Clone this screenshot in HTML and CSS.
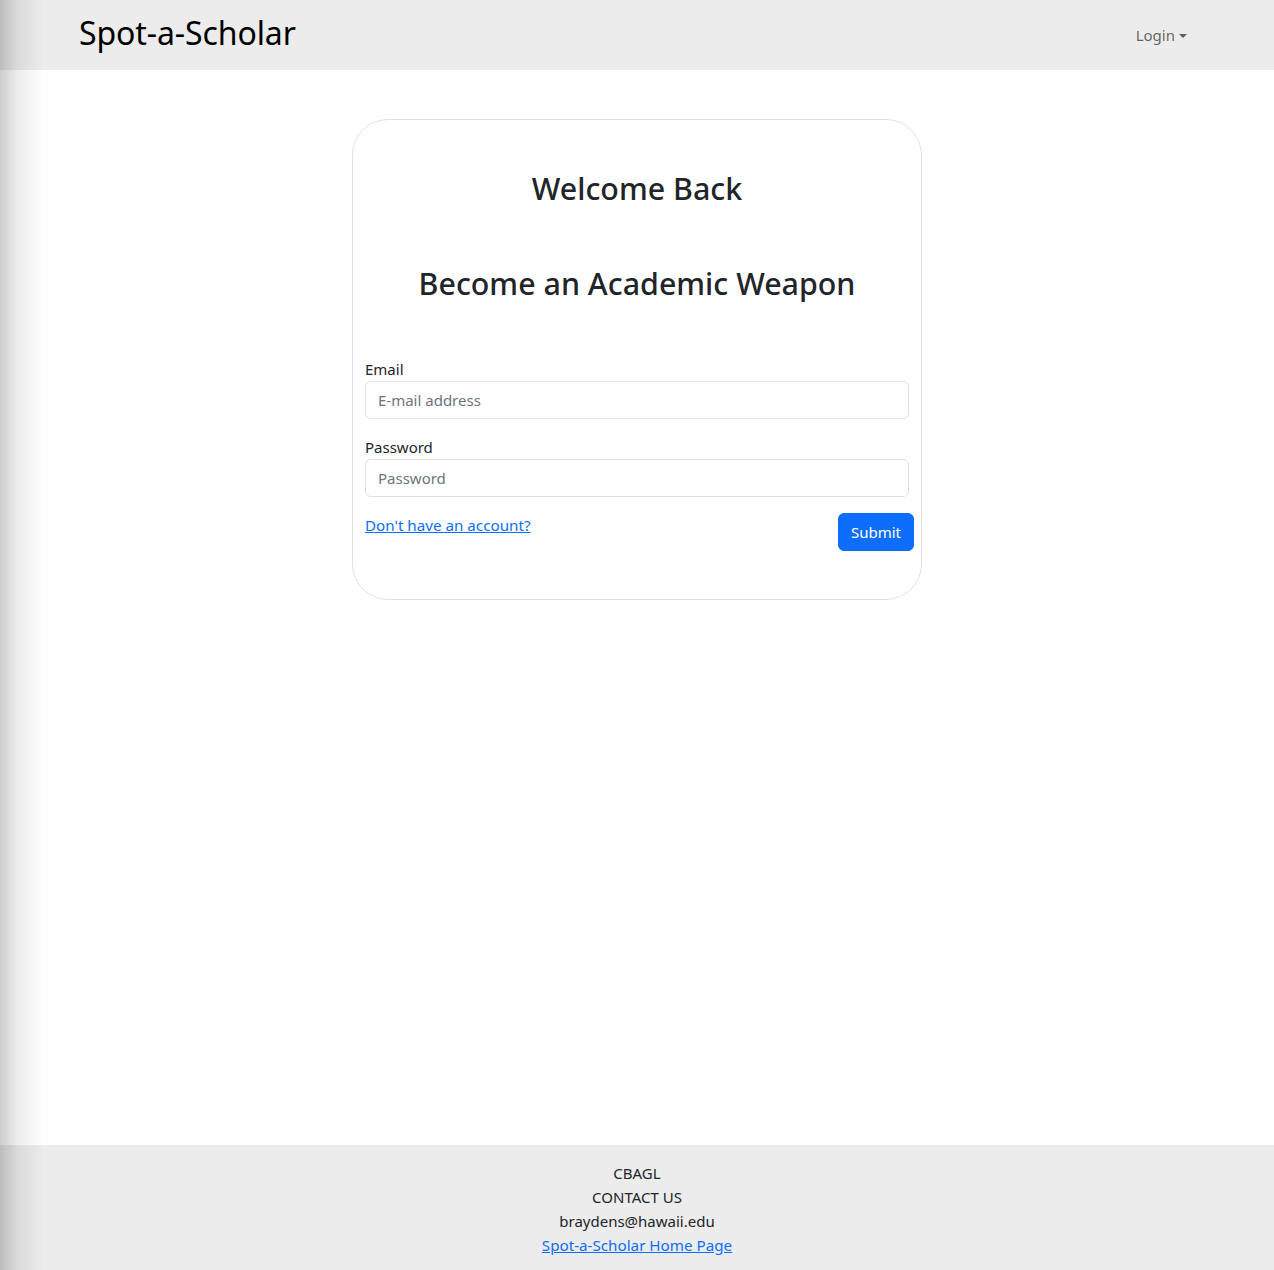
FILE: index.html
```html
<!DOCTYPE html>
<html lang="en">
<head>
<meta charset="utf-8">
<title>Spot-a-Scholar</title>
<link rel="stylesheet" href="styles.css">
</head>
<body>
<div class="edge-shade"></div>
<nav class="navbar">
  <div class="container nav-inner">
    <a class="brand" href="#">Spot-a-Scholar</a>
    <a class="nav-link" href="#">Login<span class="caret"></span></a>
  </div>
</nav>
<main class="main">
  <div class="card">
    <h2 class="title">Welcome Back</h2>
    <h2 class="subtitle">Become an Academic Weapon</h2>
    <form class="form">
      <label class="form-label" for="email">Email</label>
      <input class="form-control" id="email" type="email" placeholder="E-mail address">
      <label class="form-label gap" for="password">Password</label>
      <input class="form-control" id="password" type="password" placeholder="Password">
      <div class="form-foot">
        <a class="link" href="#">Don't have an account?</a>
        <button class="btn" type="button">Submit</button>
      </div>
    </form>
  </div>
</main>
<footer class="footer">
  <div>CBAGL</div>
  <div>CONTACT US</div>
  <div>braydens@hawaii.edu</div>
  <div><a class="link" href="#">Spot-a-Scholar Home Page</a></div>
</footer>
</body>
</html>
```
FILE: styles.css
```css
html, body {
  margin: 0;
  padding: 0;
}
body {
  font-family: "Noto Sans", "Open Sans", sans-serif;
  font-size: 16px;
  line-height: 24px;
  color: #212529;
  background: #fff;
  min-height: 100vh;
  display: flex;
  flex-direction: column;
}
.edge-shade {
  position: fixed;
  left: 0;
  top: 0;
  bottom: 0;
  width: 44px;
  background: linear-gradient(to right, rgba(0,0,0,0.2), rgba(0,0,0,0.07) 40%, rgba(0,0,0,0));
  pointer-events: none;
  z-index: 10;
}
.navbar {
  background: #ececec;
  height: 70px;
  flex-shrink: 0;
}
.container {
  width: 1140px;
  margin: 0 auto;
  padding: 0 12px;
  box-sizing: border-box;
}
.nav-inner {
  height: 100%;
  display: flex;
  align-items: center;
  justify-content: space-between;
}
.brand {
  font-size: 32px;
  color: #000;
  text-decoration: none;
  margin-top: -4px;
  letter-spacing: -0.1px;
}
.nav-link {
  color: rgba(0,0,0,0.6);
  text-decoration: none;
  font-size: 15px;
  padding: 8px;
  display: flex;
  align-items: center;
}
.caret {
  display: inline-block;
  margin-left: 4px;
  border-top: 4px solid rgba(0,0,0,0.6);
  border-left: 4px solid transparent;
  border-right: 4px solid transparent;
  margin-top: 1px;
}
.main {
  flex: 1;
  padding-top: 49px;
}
.card {
  width: 570px;
  box-sizing: border-box;
  margin: 0 auto;
  border: 1px solid #dee2e6;
  border-radius: 36px;
  padding: 50px 12px 48px;
}
.title, .subtitle {
  margin: 0;
  text-align: center;
  font-weight: 500;
  font-size: 30.4px;
  line-height: 37px;
  color: #212529;
}
.subtitle {
  margin-top: 58px;
}
.form {
  margin-top: 55px;
  display: flex;
  flex-direction: column;
}
.form-label {
  font-size: 15px;
  line-height: 24px;
}
.form-label.gap {
  margin-top: 16px;
}
.form-control {
  height: 38px;
  box-sizing: border-box;
  border: 1px solid #dee2e6;
  border-radius: 6px;
  padding: 6px 12px;
  font-family: inherit;
  font-size: 15px;
  color: #212529;
  background: #fff;
  margin: 0;
  width: 100%;
}
.form-control::placeholder {
  color: #6c757d;
}
.form-foot {
  margin-top: 16px;
  display: flex;
  justify-content: space-between;
  align-items: flex-start;
  margin-right: -6px;
}
.link {
  color: #0d6efd;
  text-decoration: underline;
  font-size: 15.2px;
}
.btn {
  height: 38px;
  padding: 0 12px;
  background: #0d6efd;
  color: #fff;
  border: 1px solid #0d6efd;
  border-radius: 6px;
  font-family: inherit;
  font-size: 15px;
  margin-left: auto;
  margin-right: 1px;
}
.footer {
  background: #ececec;
  text-align: center;
  padding: 16px 0 13px;
  font-size: 15px;
  line-height: 24px;
  flex-shrink: 0;
}
```
